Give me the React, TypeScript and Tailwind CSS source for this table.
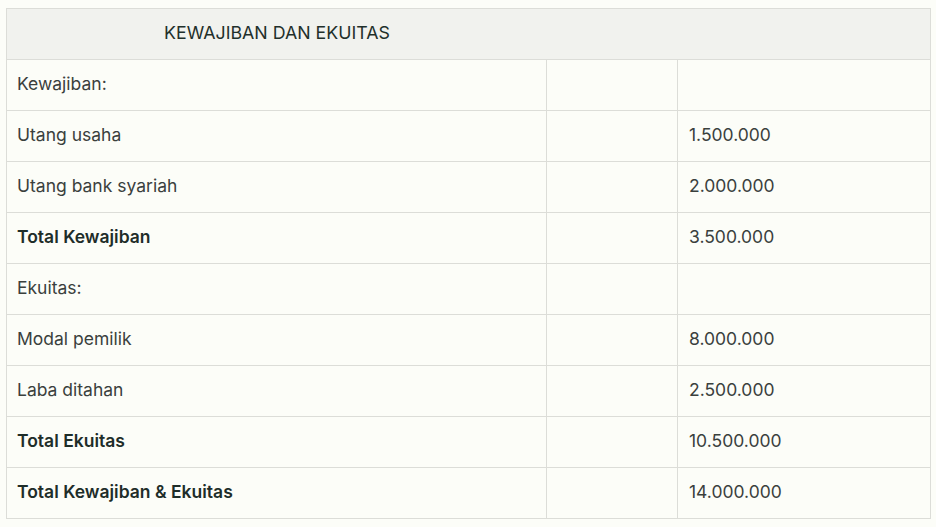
import React from "react";

const rows: { label: string; value: string; bold?: boolean }[] = [
  { label: "Kewajiban:", value: "" },
  { label: "Utang usaha", value: "1.500.000" },
  { label: "Utang bank syariah", value: "2.000.000" },
  { label: "Total Kewajiban", value: "3.500.000", bold: true },
  { label: "Ekuitas:", value: "" },
  { label: "Modal pemilik", value: "8.000.000" },
  { label: "Laba ditahan", value: "2.500.000" },
  { label: "Total Ekuitas", value: "10.500.000", bold: true },
  { label: "Total Kewajiban & Ekuitas", value: "14.000.000", bold: true },
];

export default function App() {
  return (
    <div
      className="w-[936px] h-[527px] bg-[#fcfdf8] pt-[8px] pl-[6px] text-[17.5px] text-[#3a403d]"
      style={{ fontFamily: "Inter, 'Liberation Sans', sans-serif" }}
    >
      <div className="w-[925px] border-l border-t border-[#dcddd8]">
        <div className="flex h-[51px] items-center pb-[2px] bg-[#f1f2ee] border-r border-b border-[#dcddd8]">
          <div className="w-[540px] text-center text-[#1f302b] text-[17.8px]">KEWAJIBAN DAN EKUITAS</div>
        </div>
        {rows.map((r, i) => (
          <div key={i} className="grid grid-cols-[540px_131px_253px] h-[51px]">
            <div
              className={`flex items-center pl-[10px] pb-[2px] border-r border-b border-[#dcddd8] ${
                r.bold ? "font-semibold text-[#1e2d29]" : ""
              }`}
            >
              {r.label}
            </div>
            <div className="border-r border-b border-[#dcddd8]" />
            <div className="flex items-center pl-[11px] pb-[2px] border-r border-b border-[#dcddd8]">{r.value}</div>
          </div>
        ))}
      </div>
    </div>
  );
}
